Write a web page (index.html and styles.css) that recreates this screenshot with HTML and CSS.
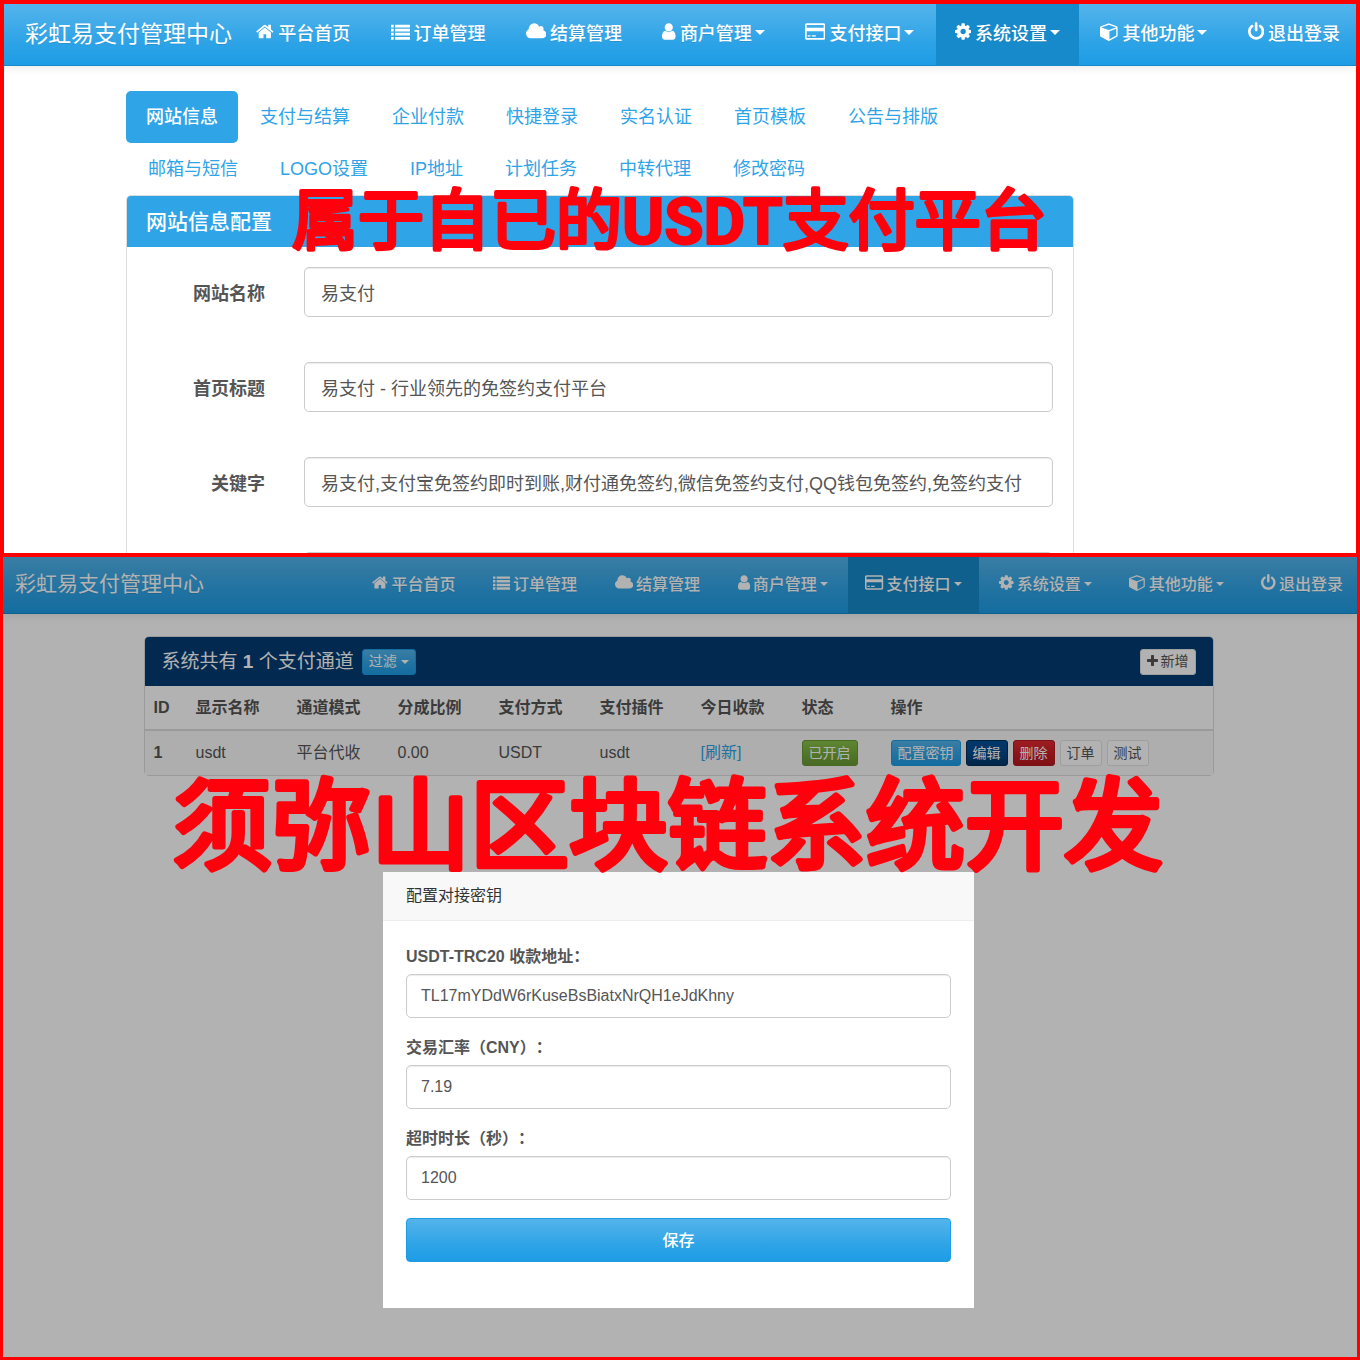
FILE: index.html
```html
<!DOCTYPE html>
<html lang="zh-CN">
<head>
<meta charset="utf-8">
<meta name="viewport" content="width=device-width, initial-scale=1">
<title>彩虹易支付管理中心</title>
<link rel="stylesheet" href="styles.css">
</head>
<body>
<svg class="sprite" aria-hidden="true">
  <defs>
    <path id="i-home" d="M1472 992v480q0 26-19 45t-45 19h-384v-384h-256v384h-384q-26 0-45-19t-19-45v-480q0-1 .5-3t.5-3l575-474 575 474q1 2 1 6zm223-69l-62 74q-8 9-21 11h-3q-13 0-21-7l-692-577-692 577q-12 8-24 7-13-2-21-11l-62-74q-8-10-7-23.5t11-21.5l719-599q32-26 76-26t76 26l244 204v-195q0-14 9-23t23-9h192q14 0 23 9t9 23v408l219 182q10 8 11 21.5t-7 23.5z"/>
    <path id="i-list" d="M0 256h256v256H0zM384 256h1408v256H384zM0 640h256v256H0zM384 640h1408v256H384zM0 1024h256v256H0zM384 1024h1408v256H384zM0 1408h256v256H0zM384 1408h1408v256H384z"/>
    <path id="i-cloud" d="M1984 1152q0 159-112.500 271.500t-271.500 112.500h-1088q-185 0-316.500-131.500t-131.500-316.500q0-132 71-241.500t187-163.500q-2-28-2-43 0-212 150-362t362-150q158 0 286.500 88t187.500 230q70-62 166-62 106 0 181 75t75 181q0 75-41 138 129 30 213 134.500t84 239.500z"/>
    <path id="i-user" d="M1536 1399q0 109-62.500 187t-150.500 78h-854q-88 0-150.500-78t-62.500-187q0-85 8.500-160.500t31.500-152 58.500-131 94-89 134.500-34.500q131 128 313 128t313-128q76 0 134.500 34.500t94 89 58.500 131 31.500 152 8.500 160.500zm-256-887q0 159-112.500 271.500t-271.500 112.500-271.500-112.500-112.500-271.500 112.500-271.500 271.500-112.500 271.500 112.500 112.500 271.500z"/>
    <path id="i-card" fill-rule="evenodd" d="M160 128h1600q66 0 113 47t47 113v1216q0 66-47 113t-113 47H160q-66 0-113-47T0 1504V288q0-66 47-113t113-47zM192 288q-32 0-32 32v224h1600V320q0-32-32-32zM160 864v608q0 32 32 32h1536q32 0 32-32V864zM256 1248h256v128H256zM640 1248h384v128H640z"/>
    <path id="i-cog" d="M1152 896q0-106-75-181t-181-75-181 75-75 181 75 181 181 75 181-75 75-181zm512-109v222q0 12-8 23t-20 13l-185 28q-19 54-39 91 35 50 107 138 10 12 10 25t-9 23q-27 37-99 108t-94 71q-12 0-26-9l-138-108q-44 23-91 38-16 136-29 186-7 28-36 28h-222q-14 0-24.500-8.500t-11.500-21.500l-28-184q-49-16-90-37l-141 107q-10 9-25 9-14 0-25-11-126-114-165-168-7-10-7-23 0-12 8-23 15-21 51-66.500t54-70.500q-27-50-41-99l-183-27q-13-2-21-12.500t-8-23.500v-222q0-12 8-23t19-13l186-28q14-46 39-92-40-57-107-138-10-12-10-24 0-10 9-23 26-36 98.500-107.500t94.500-71.500q13 0 26 10l138 107q44-23 91-38 16-136 29-186 7-28 36-28h222q14 0 24.500 8.500t11.500 21.500l28 184q49 16 90 37l142-107q9-9 24-9 13 0 25 10 129 119 165 170 7 8 7 22 0 12-8 23-15 21-51 66.500t-54 70.500q26 50 41 98l183 28q13 2 21 12.500t8 23.500z"/>
    <path id="i-cube" d="M896 1629l640-349v-636l-640 233v752zm-64-865l698-254-698-254-698 254zm832-252v768q0 35-18 65t-49 47l-704 384q-28 16-61 16t-61-16l-704-384q-31-17-49-47t-18-65v-768q0-40 23-73t61-47l704-256q22-8 44-8t44 8l704 256q38 14 61 47t23 73z"/>
    <path id="i-power" d="M1664 896q0 156-61 298t-164 245-245 164-298 61-298-61-245-164-164-245-61-298q0-182 80.500-343t226.500-270q43-32 95.500-25t83.500 50q32 42 24.500 94.500t-49.500 84.500q-98 74-151.500 181t-53.500 228q0 104 40.500 198.500t109.500 163.500 163.500 109.500 198.500 40.500 198.500-40.500 163.500-109.500 109.500-163.500 40.500-198.500q0-121-53.500-228t-151.500-181q-42-32-49.500-84.500t24.500-94.500q31-43 84-50t95 25q146 109 226.500 270t80.500 343zm-640-768v640q0 52-38 90t-90 38-90-38-38-90v-640q0-52 38-90t90-38 90 38 38 90z"/>
    <path id="i-plus" d="M1600 736v192q0 40-28 68t-68 28h-416v416q0 40-28 68t-68 28h-192q-40 0-68-28t-28-68v-416h-416q-40 0-68-28t-28-68v-192q0-40 28-68t68-28h416v-416q0-40 28-68t68-28h192q40 0 68 28t28 68v416h416q40 0 68 28t28 68z"/>
  </defs>
</svg>

<section class="screen screen-settings">
  <header class="navbar">
    <a class="brand" href="#">彩虹易支付管理中心</a>
    <nav>
      <ul class="menu">
        <li><a href="#"><svg class="icon" viewBox="64 0 1728 1792"><use href="#i-home"/></svg>平台首页</a></li>
        <li><a href="#"><svg class="icon" viewBox="0 0 1792 1792"><use href="#i-list"/></svg>订单管理</a></li>
        <li><a href="#"><svg class="icon" viewBox="64 0 1920 1792"><use href="#i-cloud"/></svg>结算管理</a></li>
        <li><a href="#"><svg class="icon" viewBox="256 0 1280 1792"><use href="#i-user"/></svg>商户管理<span class="caret"></span></a></li>
        <li><a href="#"><svg class="icon" viewBox="0 0 1920 1792"><use href="#i-card"/></svg>支付接口<span class="caret"></span></a></li>
        <li class="active"><a href="#"><svg class="icon" viewBox="128 0 1536 1792"><use href="#i-cog"/></svg>系统设置<span class="caret"></span></a></li>
        <li><a href="#"><svg class="icon" viewBox="0 0 1728 1792"><use href="#i-cube"/></svg>其他功能<span class="caret"></span></a></li>
        <li><a href="#"><svg class="icon" viewBox="128 0 1536 1792"><use href="#i-power"/></svg>退出登录</a></li>
      </ul>
    </nav>
  </header>

  <main class="settings">
    <ul class="pills">
      <li class="active"><a href="#">网站信息</a></li>
      <li><a href="#">支付与结算</a></li>
      <li><a href="#">企业付款</a></li>
      <li><a href="#">快捷登录</a></li>
      <li><a href="#">实名认证</a></li>
      <li><a href="#">首页模板</a></li>
      <li><a href="#">公告与排版</a></li>
      <li><a href="#">邮箱与短信</a></li>
      <li><a href="#">LOGO设置</a></li>
      <li><a href="#">IP地址</a></li>
      <li><a href="#">计划任务</a></li>
      <li><a href="#">中转代理</a></li>
      <li><a href="#">修改密码</a></li>
    </ul>
    <div class="site-panel">
      <h3>网站信息配置</h3>
      <form class="site-form">
        <div class="row"><label for="site-name">网站名称</label><input id="site-name" type="text" value="易支付"></div>
        <div class="row"><label for="site-title">首页标题</label><input id="site-title" type="text" value="易支付 - 行业领先的免签约支付平台"></div>
        <div class="row"><label for="site-keys">关键字</label><input id="site-keys" type="text" value="易支付,支付宝免签约即时到账,财付通免签约,微信免签约支付,QQ钱包免签约,免签约支付"></div>
        <div class="row"><label for="site-desc"></label><input id="site-desc" type="text"></div>
      </form>
    </div>
  </main>
  <svg class="slogan slogan-top" width="780" height="110"><text x="5" y="78">属于自已的<tspan class="latin">USDT</tspan>支付平台</text></svg>
</section>

<section class="screen screen-channels">
  <header class="navbar">
    <a class="brand" href="#">彩虹易支付管理中心</a>
    <nav>
      <ul class="menu">
        <li><a href="#"><svg class="icon" viewBox="64 0 1728 1792"><use href="#i-home"/></svg>平台首页</a></li>
        <li><a href="#"><svg class="icon" viewBox="0 0 1792 1792"><use href="#i-list"/></svg>订单管理</a></li>
        <li><a href="#"><svg class="icon" viewBox="64 0 1920 1792"><use href="#i-cloud"/></svg>结算管理</a></li>
        <li><a href="#"><svg class="icon" viewBox="256 0 1280 1792"><use href="#i-user"/></svg>商户管理<span class="caret"></span></a></li>
        <li class="active"><a href="#"><svg class="icon" viewBox="0 0 1920 1792"><use href="#i-card"/></svg>支付接口<span class="caret"></span></a></li>
        <li><a href="#"><svg class="icon" viewBox="128 0 1536 1792"><use href="#i-cog"/></svg>系统设置<span class="caret"></span></a></li>
        <li><a href="#"><svg class="icon" viewBox="0 0 1728 1792"><use href="#i-cube"/></svg>其他功能<span class="caret"></span></a></li>
        <li><a href="#"><svg class="icon" viewBox="128 0 1536 1792"><use href="#i-power"/></svg>退出登录</a></li>
      </ul>
    </nav>
  </header>

  <main class="channels">
    <div class="channel-panel">
      <div class="channel-head">
        <h3>系统共有 <b>1</b> 个支付通道</h3>
        <button class="btn btn-info" type="button">过滤<span class="caret"></span></button>
        <button class="btn btn-default btn-add" type="button"><svg class="icon" viewBox="192 0 1408 1792"><use href="#i-plus"/></svg>新增</button>
      </div>
      <table>
        <colgroup><col class="c-id"><col class="c-std" span="6"><col class="c-state"><col></colgroup>
        <thead>
          <tr><th>ID</th><th>显示名称</th><th>通道模式</th><th>分成比例</th><th>支付方式</th><th>支付插件</th><th>今日收款</th><th>状态</th><th>操作</th></tr>
        </thead>
        <tbody>
          <tr>
            <td><b>1</b></td><td>usdt</td><td>平台代收</td><td>0.00</td><td>USDT</td><td>usdt</td>
            <td><a href="#">[刷新]</a></td>
            <td><div class="actions"><button class="btn btn-success" type="button">已开启</button></div></td>
            <td>
              <div class="actions">
                <button class="btn btn-info" type="button">配置密钥</button>
                <button class="btn btn-primary" type="button">编辑</button>
                <button class="btn btn-danger" type="button">删除</button>
                <button class="btn btn-default" type="button">订单</button>
                <button class="btn btn-default" type="button">测试</button>
              </div>
            </td>
          </tr>
        </tbody>
      </table>
    </div>
  </main>

  <div class="shade">
    <div class="dialog" role="dialog" aria-labelledby="dialog-title">
      <h4 id="dialog-title">配置对接密钥</h4>
      <form class="key-form">
        <label for="addr">USDT-TRC20 收款地址：</label>
        <input id="addr" type="text" value="TL17mYDdW6rKuseBsBiatxNrQH1eJdKhny">
        <label for="rate">交易汇率（CNY）：</label>
        <input id="rate" type="text" value="7.19">
        <label for="timeout">超时时长（秒）：</label>
        <input id="timeout" type="text" value="1200">
        <button class="save" type="button">保存</button>
      </form>
    </div>
  </div>
  <svg class="slogan slogan-bottom" width="1010" height="160"><text x="7" y="118">须弥山区块链系统开发</text></svg>
</section>
</body>
</html>
```
FILE: styles.css
```css
* {
  box-sizing: border-box;
}

body {
  margin: 0;
  min-height: 100vh;
  display: flex;
  flex-direction: column;
  background: #fff;
  color: #555;
  font-family: "Liberation Sans", "Noto Sans CJK SC", sans-serif;
  font-size: 16px;
  text-spacing-trim: space-all;
}

h3, h4, p, ul {
  margin: 0;
  padding: 0;
  font-weight: normal;
}

ul {
  list-style: none;
}

a {
  color: #2fa4e7;
  text-decoration: none;
}

input, button {
  font: inherit;
}

.sprite {
  position: absolute;
  width: 0;
  height: 0;
}

/* Framed screens */
.screen {
  position: relative;
  border: 4px solid #f00;
  overflow: hidden;
}

.screen-settings {
  height: 557px;
  flex: none;
  font-size: 18px;
}

.screen-channels {
  flex: 1 0 auto;
  min-height: 800px;
  border-width: 0 3px 3px;
}

/* Navigation bar */
.navbar {
  display: flex;
  align-items: stretch;
  justify-content: space-between;
  color: #fff;
  background: linear-gradient(#54b4eb, #2fa4e7 60%, #1d9ce5);
  border-bottom: 1px solid #178acc;
  box-shadow: 0 1px 10px rgba(0, 0, 0, .1);
  white-space: nowrap;
}

.navbar a {
  color: #fff;
  text-shadow: 0 1px 0 rgba(0, 0, 0, .1);
}

.brand {
  display: flex;
  align-items: center;
}

.menu {
  display: flex;
  justify-content: space-between;
  height: 100%;
}

.menu a {
  display: flex;
  align-items: center;
  height: 100%;
  font-weight: 500;
}

.menu .active {
  background: #178acc;
}

.icon {
  height: 14px;
  width: auto;
  fill: currentColor;
  flex: none;
  margin-right: 4px;
}

.caret {
  border: 5px solid transparent;
  border-top-color: currentColor;
  border-bottom: 0;
  margin: 2px 0 0 3px;
}

.screen-settings .navbar {
  height: 62px;
}

.screen-settings .brand {
  padding: 0 0 6px 21px;
  font-size: 23px;
}

.screen-settings nav {
  flex: 1;
  margin-left: 5px;
}

.screen-settings .menu a {
  padding: 0 19px 6px;
}

.screen-settings .menu .icon {
  height: 19px;
}

.screen-settings .menu li:last-child a {
  padding-right: 16px;
}

.screen-channels .navbar {
  height: 57px;
}

.screen-channels .brand {
  padding: 0 0 6px 12px;
  font-size: 21px;
}

.screen-channels nav {
  flex: 0 0 74%;
}

.screen-channels .menu a {
  padding: 0 17px 5px;
}

.screen-channels .menu .icon {
  height: 17px;
  margin-right: 3px;
}

.screen-channels .menu li:last-child a {
  padding-right: 14px;
}

.screen-channels .caret {
  border-width: 4px 4px 0;
}

/* Settings page */
.settings {
  max-width: 948px;
  margin: 25px 0 0 122px;
}

.pills {
  display: flex;
  flex-wrap: wrap;
}

.pills li + li {
  margin-left: 2px;
}

.pills a {
  display: block;
  padding: 0 20px;
  line-height: 52px;
  border-radius: 5px;
}

.pills .active a {
  color: #fff;
  background: #2fa4e7;
  font-weight: 500;
}

.site-panel {
  border: 1px solid #ddd;
  border-radius: 5px;
}

.site-panel h3 {
  padding: 0 19px;
  font-size: 21px;
  font-weight: 500;
  line-height: 51px;
  color: #fff;
  background: #2fa4e7;
  border-radius: 4px 4px 0 0;
}

.site-form {
  display: grid;
  gap: 45px;
  padding: 20px;
}

.row {
  display: grid;
  grid-template-columns: 118px 1fr;
  gap: 39px;
  align-items: center;
}

.row label {
  text-align: right;
  font-weight: bold;
}

.row input, .key-form input {
  width: 100%;
  min-width: 0;
  color: #555;
  background: #fff;
  border: 1px solid #ccc;
  border-radius: 5px;
  box-shadow: inset 0 1px 1px rgba(0, 0, 0, .08);
}

.row input {
  height: 50px;
  padding: 0 16px;
}

/* Channel list */
.channels {
  max-width: 1073px;
  margin: 22px auto 0;
  padding-right: 3px;
}

.channel-panel {
  border: 1px solid #ddd;
  border-radius: 5px;
}

.channel-head {
  display: flex;
  align-items: center;
  gap: 8px;
  height: 49px;
  padding: 0 17px;
  color: #fff;
  background: #033c73;
  border-radius: 4px 4px 0 0;
}

.channel-head h3 {
  font-size: 19px;
  padding-bottom: 4px;
}

.btn {
  display: inline-flex;
  align-items: center;
  justify-content: center;
  height: 26px;
  padding: 0 6px 1px;
  font-size: 14px;
  line-height: 20px;
  color: #fff;
  border: 1px solid;
  border-radius: 3px;
  white-space: nowrap;
}

.btn .icon {
  margin-right: 3px;
}

.btn .caret {
  margin-left: 4px;
}

.btn-add {
  margin-left: auto;
}

.btn-info {
  background: linear-gradient(#54b4eb, #2fa4e7 60%, #1d9ce5);
  border-color: #1d9ce5;
}

.btn-success {
  background: linear-gradient(#88c149, #73a839 60%, #699934);
  border-color: #699934;
}

.btn-primary {
  background: linear-gradient(#04519b, #044687 60%, #033769);
  border-color: #022f5a;
}

.btn-danger {
  background: linear-gradient(#e12b31, #c71c22 60%, #b5191f);
  border-color: #b5191f;
}

.btn-default {
  color: #555;
  background: #fff;
  border-color: #e2e2e2;
}

table {
  width: 100%;
  table-layout: fixed;
  border-collapse: collapse;
}

.c-id {
  width: 42px;
}

.c-std {
  width: 101px;
}

.c-state {
  width: 89px;
}

th, td {
  height: 44px;
  padding: 0 0 0 9px;
  line-height: 20px;
  text-align: left;
  vertical-align: middle;
}

td {
  height: 45px;
  border-top: 2px solid #ddd;
  background: #f9f9f9;
}

.actions {
  display: flex;
  gap: 5px;
}

/* Dialog above the shaded page */
.shade {
  position: absolute;
  inset: 0;
  display: flex;
  justify-content: center;
  align-items: flex-start;
  padding: 315px 3px 0 0;
  background: rgba(0, 0, 0, .3);
}

.dialog {
  width: 100%;
  max-width: 591px;
  background: #fff;
}

.dialog h4 {
  padding: 0 23px;
  font-size: 16px;
  line-height: 48px;
  color: #333;
  background: #f8f8f8;
  border-bottom: 1px solid #eee;
}

.key-form {
  display: flex;
  flex-direction: column;
  padding: 24px 23px 46px;
}

.key-form label {
  line-height: 24px;
  margin-bottom: 5px;
  font-weight: bold;
}

.key-form input {
  height: 44px;
  margin-bottom: 18px;
  padding: 0 14px;
}

.save {
  height: 44px;
  padding-bottom: 4px;
  color: #fff;
  font-weight: 500;
  background: linear-gradient(#54b4eb, #2fa4e7 60%, #1d9ce5);
  border: 1px solid #1d9ce5;
  border-radius: 4px;
}

/* Red promotional captions lying over the screens */
.slogan {
  position: absolute;
  max-width: 100%;
  fill: #ff000c;
  stroke: #ff000c;
  stroke-linejoin: round;
  stroke-linecap: round;
  font-family: "Noto Sans CJK SC", sans-serif;
}

.slogan-top {
  top: 162px;
  left: 283px;
  font-size: 66px;
  font-weight: 400;
  stroke-width: 4px;
}

.slogan-top .latin {
  font-family: Roboto, sans-serif;
  font-size: 64px;
  font-weight: 700;
  stroke-width: 2px;
}

.slogan-bottom {
  top: 186px;
  left: 163px;
  font-size: 99px;
  font-weight: 400;
  stroke-width: 6px;
}
```
